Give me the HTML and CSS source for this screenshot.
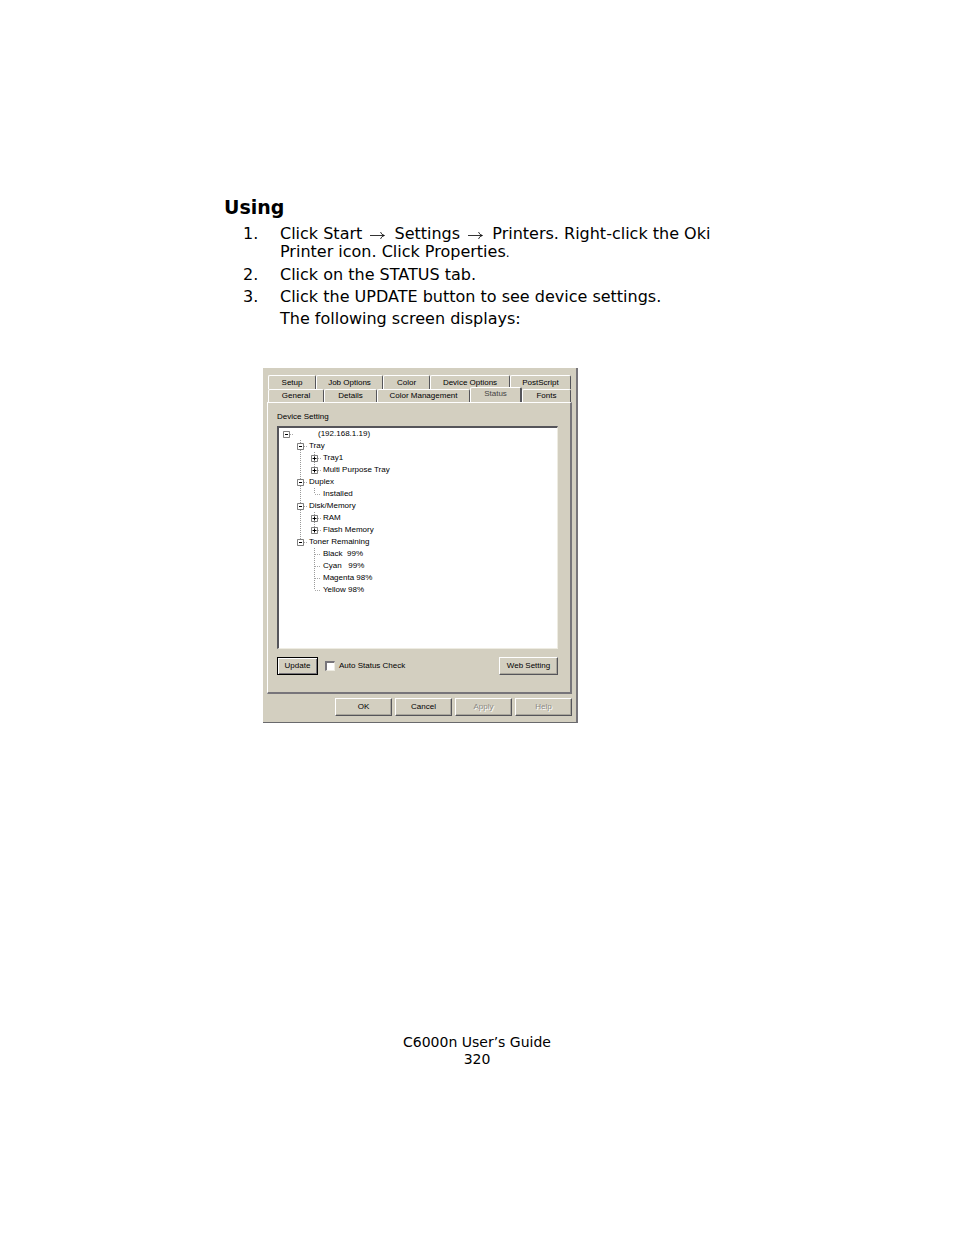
FILE: index.html
```html
<!DOCTYPE html>
<html lang="en">
<head>
    <meta charset="utf-8">
    <meta name="viewport" content="width=device-width, initial-scale=1">
    <title>C6000n User’s Guide - 320</title>
    <link rel="stylesheet" href="styles.css">
</head>
<body>
    <!-- Tree expander icons -->
    <svg class="symbols" width="0" height="0" aria-hidden="true">
        <symbol id="minus" viewBox="0 0 7 7">
            <path d="M.5 .5h6v6h-6z" fill="#fff" stroke="#808080"/>
            <path d="M2 3.5h3" stroke="#000"/>
        </symbol>
        <symbol id="plus" viewBox="0 0 7 7">
            <path d="M.5 .5h6v6h-6z" fill="#fff" stroke="#808080"/>
            <path d="M1.500 3.5h4M3.500 1.500v4" stroke="#000"/>
        </symbol>
        <symbol id="arrow" viewBox="0 0 16 10">
            <path d="M0 5.500h14M10.500 2q1 3 4 3.500q-3 .5-4 3.500" fill="none" stroke="#000" stroke-width=".8"/>
        </symbol>
    </svg>

    <main class="page">
        <h1>Using</h1>
        <ol class="steps">
            <li>
                <span class="num">1.</span>
                <p>Click Start <svg class="arrow" role="img" aria-label="to"><use href="#arrow"/></svg> Settings <svg class="arrow" role="img" aria-label="to"><use href="#arrow"/></svg> Printers. Right-click the Oki Printer icon. Click Properties<span class="stop">.</span></p>
            </li>
            <li>
                <span class="num">2.</span>
                <p>Click on the STATUS tab.</p>
            </li>
            <li>
                <span class="num">3.</span>
                <div>
                    <p>Click the UPDATE button to see device settings.</p>
                    <p class="more">The following screen displays:</p>
                </div>
            </li>
        </ol>

        <form class="dialog">
            <div class="tabs" role="tablist">
                <div class="tab-row tab-row-back">
                    <button type="button" role="tab">Setup</button>
                    <button type="button" role="tab">Job Options</button>
                    <button type="button" role="tab">Color</button>
                    <button type="button" role="tab">Device Options</button>
                    <button type="button" role="tab">PostScript</button>
                </div>
                <div class="tab-row tab-row-front">
                    <button type="button" role="tab">General</button>
                    <button type="button" role="tab">Details</button>
                    <button type="button" role="tab">Color Management</button>
                    <button type="button" role="tab" class="active" aria-selected="true">Status</button>
                    <button type="button" role="tab">Fonts</button>
                </div>
            </div>

            <section class="panel">
                <h2>Device Setting</h2>
                <div class="tree">
                    <div class="row root"><button type="button" class="toggle" aria-label="Collapse"><svg><use href="#minus"/></svg></button><span>(192.168.1.19)</span></div>
                    <ul>
                        <li>
                            <div class="row"><button type="button" class="toggle" aria-label="Collapse"><svg><use href="#minus"/></svg></button><span>Tray</span></div>
                            <ul>
                                <li><div class="row"><button type="button" class="toggle" aria-label="Expand"><svg><use href="#plus"/></svg></button><span>Tray1</span></div></li>
                                <li><div class="row"><button type="button" class="toggle" aria-label="Expand"><svg><use href="#plus"/></svg></button><span>Multi Purpose Tray</span></div></li>
                            </ul>
                        </li>
                        <li>
                            <div class="row"><button type="button" class="toggle" aria-label="Collapse"><svg><use href="#minus"/></svg></button><span>Duplex</span></div>
                            <ul>
                                <li><div class="row leaf"><span>Installed</span></div></li>
                            </ul>
                        </li>
                        <li>
                            <div class="row"><button type="button" class="toggle" aria-label="Collapse"><svg><use href="#minus"/></svg></button><span>Disk/Memory</span></div>
                            <ul>
                                <li><div class="row"><button type="button" class="toggle" aria-label="Expand"><svg><use href="#plus"/></svg></button><span>RAM</span></div></li>
                                <li><div class="row"><button type="button" class="toggle" aria-label="Expand"><svg><use href="#plus"/></svg></button><span>Flash Memory</span></div></li>
                            </ul>
                        </li>
                        <li>
                            <div class="row"><button type="button" class="toggle" aria-label="Collapse"><svg><use href="#minus"/></svg></button><span>Toner Remaining</span></div>
                            <ul>
                                <li><div class="row leaf"><span>Black  99%</span></div></li>
                                <li><div class="row leaf"><span>Cyan   99%</span></div></li>
                                <li><div class="row leaf"><span>Magenta 98%</span></div></li>
                                <li><div class="row leaf"><span>Yellow 98%</span></div></li>
                            </ul>
                        </li>
                    </ul>
                </div>
                <div class="actions">
                    <button type="button" class="btn btn-update">Update</button>
                    <input type="checkbox" id="auto-check">
                    <label for="auto-check">Auto Status Check</label>
                    <button type="button" class="btn btn-web">Web Setting</button>
                </div>
            </section>

            <div class="footer-buttons">
                <button type="button" class="btn">OK</button>
                <button type="button" class="btn">Cancel</button>
                <button type="button" class="btn" disabled>Apply</button>
                <button type="button" class="btn" disabled>Help</button>
            </div>
        </form>
    </main>

    <footer>
        <p>C6000n User’s Guide</p>
        <p>320</p>
    </footer>
</body>
</html>
```

FILE: styles.css
```css
* {
    box-sizing: border-box;
}

body {
    margin: 0;
    background: #fff;
    color: #000;
    font-family: "DejaVu Sans", Verdana, sans-serif;
}

h1, h2, p, ul, ol {
    margin: 0;
    padding: 0;
    font-weight: normal;
    list-style: none;
}

.symbols {
    display: block;
}

.page {
    max-width: 506px;
    margin: 0 auto;
    padding-top: 195px;
}

h1 {
    font-size: 19px;
    font-weight: bold;
    line-height: 24px;
}

/* Numbered steps */
.steps {
    padding: 6px 0 0 19px;
    font-size: 16px;
    line-height: 18px;
}

.steps li {
    display: flex;
    margin-bottom: 4px;
}

.num {
    flex: 0 0 37px;
}

.more {
    margin-top: 4px;
}

.arrow {
    width: 16px;
    height: 10px;
    margin: 0 3px;
    vertical-align: -1px;
}

.stop {
    font-size: 12px;
}

/* Printer properties dialog */
.dialog {
    width: fit-content;
    margin: 40px 0 0 39px;
    padding: 7px 4px 6px;
    background: #d3cfc0;
    border-right: 2px solid #77757a;
    border-bottom: 1px solid #69696c;
    font: 8px/10px "Liberation Sans", Arial, sans-serif;
}

.dialog button {
    margin: 0;
    padding: 0;
    background: #d3cfc0;
    color: #000;
    font: inherit;
    white-space: nowrap;
}

.tab-row {
    display: grid;
    align-items: end;
    width: 303px;
    margin-left: 1px;
}

.tab-row-back {
    grid-template-columns: 48px 67px 47px 80px 61px;
}

.tab-row-front {
    grid-template-columns: 56px 53px 93px 52px 49px;
}

.tab-row button {
    height: 14px;
    border: 1px solid #fff;
    border-right-color: #55555a;
    border-bottom: 0;
    border-radius: 2px 2px 0 0;
}

.tab-row-front button {
    height: 13px;
}

.tab-row .active {
    height: 15px;
    margin: -2px 0 0;
    padding-bottom: 2px;
    border-right-width: 2px;
    color: #444;
}

.panel {
    padding: 9px 12px 17px 9px;
    border: 1px solid #fff;
    border-right: 2px solid #77757a;
    border-bottom: 2px solid #77757a;
}

.panel h2 {
    font-size: 8px;
    line-height: 10px;
}

.tree {
    width: 281px;
    height: 223px;
    margin-top: 4px;
    padding: 0 4px;
    background: #fff;
    border: 1px solid #eeece2;
    border-top: 2px solid #55555a;
    border-left: 2px solid #55555a;
}

.tree ul {
    padding-left: 14px;
}

/* Dotted connector running down the left of each branch */
.tree li {
    background: repeating-linear-gradient(#999 0 1px, #fff 1px 2px) 3px 0 / 1px 100% no-repeat;
}

.tree li:last-child {
    background-size: 1px 6px;
}

.row {
    display: flex;
    align-items: center;
    height: 12px;
    white-space: pre;
}

.row::before {
    content: "";
    order: 1;
    width: 3px;
    height: 1px;
    margin-right: 2px;
    background: repeating-linear-gradient(90deg, #aaa 0 1px, #fff 1px 2px);
}

.row span {
    order: 2;
}

.root span {
    padding-left: 23px;
}

.leaf::before {
    width: 6px;
    margin-left: 4px;
}

.dialog .toggle {
    display: flex;
    border: 0;
}

.toggle svg {
    width: 7px;
    height: 7px;
}

.actions {
    display: flex;
    align-items: center;
    margin-top: 8px;
}

.dialog .btn {
    height: 18px;
    border: 1px solid #fff;
    border-right-color: #55555a;
    border-bottom-color: #55555a;
    box-shadow: inset -1px -1px #aaa79c;
}

.dialog .btn-update {
    width: 41px;
    border: 1px solid #000;
    box-shadow: inset 1px 1px #fff, inset -1px -1px #77757a;
}

.dialog .btn-web {
    width: 59px;
    margin-left: auto;
}

#auto-check {
    appearance: none;
    width: 10px;
    height: 10px;
    margin: 0 4px 0 7px;
    background: #fff;
    border: 1px solid #eeece2;
    border-top: 2px solid #77757a;
    border-left: 2px solid #77757a;
}

.footer-buttons {
    display: grid;
    grid-template-columns: repeat(4, 57px);
    justify-content: end;
    gap: 3px;
    margin-top: 4px;
}

.dialog .btn:disabled {
    color: #8c8a84;
    text-shadow: 1px 1px #fff;
}

footer {
    margin: 311px 0 0;
    padding-bottom: 166px;
    font-size: 14px;
    line-height: 17px;
    text-align: center;
}
```
